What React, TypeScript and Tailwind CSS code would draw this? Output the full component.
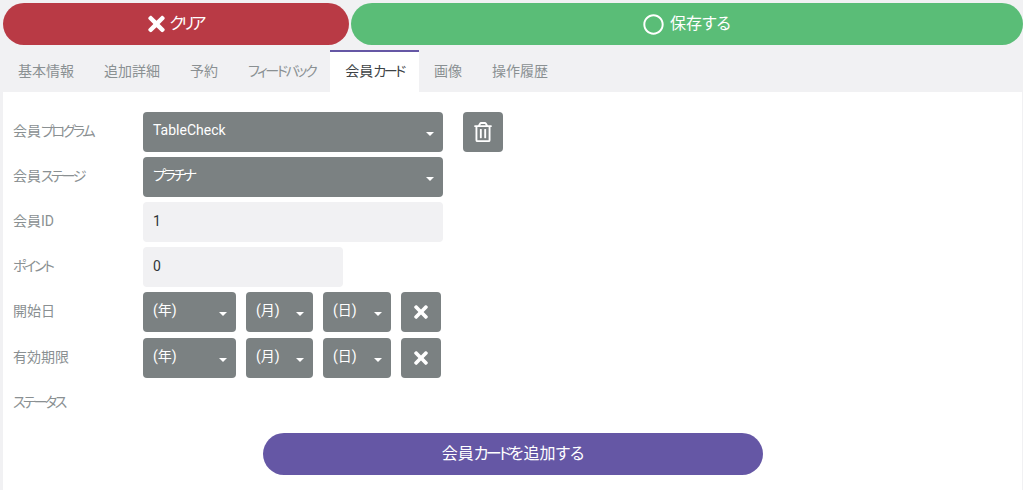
import { Fragment } from 'react'
import { FaRegCircle, FaRegTrashAlt, FaTimes } from 'react-icons/fa'

const font = "font-['Roboto','Noto_Sans_CJK_JP',sans-serif] [font-feature-settings:'palt']"
const tabs = ['基本情報', '追加詳細', '予約', 'フィードバック', '会員カード', '画像', '操作履歴']

// katakana sits tighter than the CJK font gives by default
function Kana({ text }: { text: string }) {
    return (
        <>
            {text.split(/([ァ-ヶー]+)/).map((part, i) =>
                i % 2 === 1
                    ? <span key={i} className="tracking-[-0.17em]">{part}</span>
                    : <Fragment key={i}>{part}</Fragment>
            )}
        </>
    )
}

function Row({ label, children }: { label: string; children?: React.ReactNode }) {
    return (
        <div className="flex items-center h-10 mb-[5px]">
            <div className="w-[130px] pb-[3px] text-sm text-[#8a9092]"><Kana text={label} /></div>
            {children}
        </div>
    )
}

function Select({ value, width }: { value: string; width: string }) {
    return (
        <div className={`${width} h-10 flex items-center justify-between pl-2.5 pr-[9px] rounded bg-[#7b8182] text-sm text-white`}>
            <span className="pb-1"><Kana text={value} /></span>
            <span className="mt-1 border-x-4 border-t-4 border-x-transparent border-t-white" />
        </div>
    )
}

function SquareButton({ children }: { children: React.ReactNode }) {
    return <button className="w-10 h-10 flex items-center justify-center rounded bg-[#7b8182] text-white">{children}</button>
}

function DateRow({ label }: { label: string }) {
    return (
        <Row label={label}>
            <div className="flex items-center gap-2.5">
                <Select value="(年)" width="w-[93px]" />
                <Select value="(月)" width="w-[67px]" />
                <Select value="(日)" width="w-[68px]" />
                <SquareButton><FaTimes className="w-5 h-5" /></SquareButton>
            </div>
        </Row>
    )
}

export default function App() {
    return (
        <div className={`${font} w-[1023px] h-[490px] overflow-hidden bg-[#f1f1f3] pt-[3px] pl-[3px]`}>
            <div className="flex gap-0.5 h-[42px] text-base text-white">
                <button className="w-[346px] flex items-center justify-center gap-1 rounded-full bg-[#b93a45]">
                    <FaTimes className="w-[17px] h-6" />
                    <span><Kana text="クリア" /></span>
                </button>
                <button className="flex-1 flex items-center justify-center gap-1.5 rounded-full bg-[#5abd77]">
                    <FaRegCircle className="w-[21px] h-[21px]" />
                    保存する
                </button>
            </div>

            <div className="flex h-[42px] mt-[5px] text-sm text-[#8a9092]">
                {tabs.map((tab) => (
                    <div
                        key={tab}
                        className={tab === '会員カード'
                            ? 'flex items-center px-[15px] pb-0.5 border-t-2 border-[#6557a5] bg-white text-[#3d4245]'
                            : 'flex items-center px-[15px]'}
                    >
                        <span><Kana text={tab} /></span>
                    </div>
                ))}
            </div>

            <div className="h-[398px] mr-px bg-white pl-2.5 pt-5">
                <div className="flex items-center h-10 mb-[5px]">
                    <div className="w-[130px] pb-[3px] text-sm text-[#8a9092]"><Kana text="会員プログラム" /></div>
                    <Select value="TableCheck" width="w-[300px]" />
                    <div className="ml-5">
                        <SquareButton><FaRegTrashAlt className="w-5 h-5" /></SquareButton>
                    </div>
                </div>
                <Row label="会員ステージ"><Select value="プラチナ" width="w-[300px]" /></Row>
                <Row label="会員ID">
                    <div className="w-[300px] h-10 flex items-center px-2.5 pb-0.5 rounded bg-[#f1f1f3] text-sm text-[#2f3437]">1</div>
                </Row>
                <Row label="ポイント">
                    <div className="w-[200px] h-10 flex items-center px-2.5 pb-0.5 rounded bg-[#f1f1f3] text-sm text-[#2f3437]">0</div>
                </Row>
                <DateRow label="開始日" />
                <div className="h-px" />
                <DateRow label="有効期限" />
                <Row label="ステータス" />
                <div className="w-[500px] h-[42px] ml-[250px] mt-[10px] flex items-center justify-center rounded-full bg-[#6557a5] text-base text-white">
                    <span><Kana text="会員カードを追加する" /></span>
                </div>
            </div>
        </div>
    )
}
